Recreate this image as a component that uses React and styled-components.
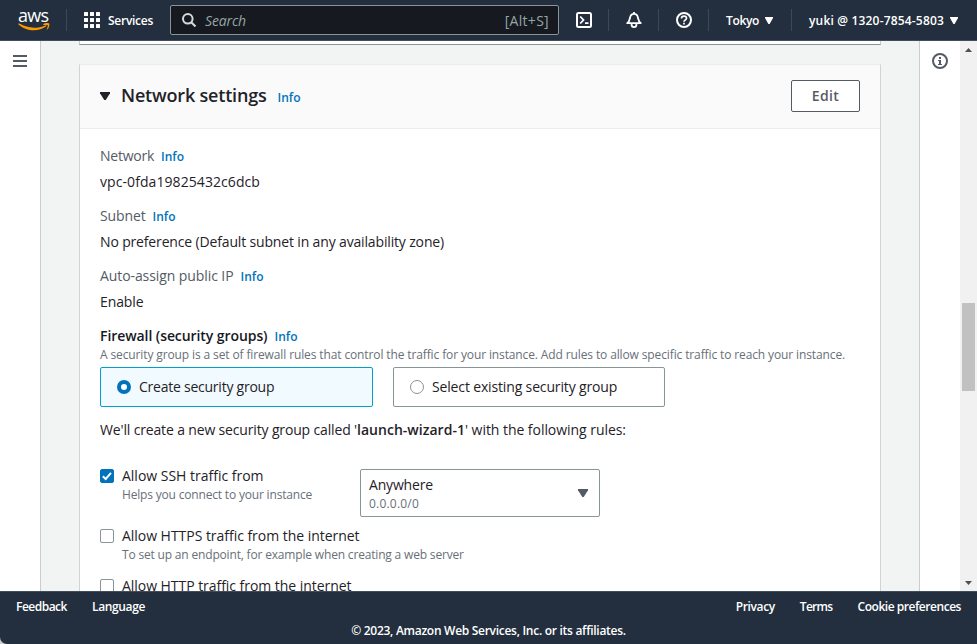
import React from "react";
import styled, { createGlobalStyle } from "styled-components";

const GlobalStyle = createGlobalStyle`
  * { box-sizing: border-box; }
  body {
    margin: 0;
    overflow: hidden;
    background: #fff;
    font-family: "Open Sans", "Noto Sans", sans-serif;
    font-size: 14px;
    color: #1f2228;
  }
  button { font-family: inherit; cursor: pointer; }
  svg { display: block; flex: none; }
`;

/* ---------- shared ---------- */

const Text = styled.span`
  white-space: pre;
  letter-spacing: ${(p) => p.$track || 0}px;
`;

const InfoLink = styled.a`
  color: #0073bb;
  font-size: 12px;
  font-weight: 600;
  line-height: 18px;
  cursor: pointer;
`;

const Caret = ({ size = 8, height = 7 }) => (
  <svg width={size} height={height} viewBox="0 0 8 7" preserveAspectRatio="none">
    <path d="M0 0h8v1L4.6 7H3.4L0 1z" fill="currentColor" />
  </svg>
);

/* ---------- frame ---------- */

const Page = styled.div`
  display: flex;
  flex-direction: column;
  height: 644px;
  width: 977px;
  overflow: hidden;
  background: #c9cdd2;
`;

const Body = styled.div`
  display: flex;
  flex: 1;
  min-height: 0;
  background: #f2f3f3;
`;

/* ---------- top bar ---------- */

const TopBar = styled.header`
  display: flex;
  align-items: center;
  flex: none;
  height: 41px;
  background: #232f3e;
  border-bottom: 1px solid #414d5c;
  color: #fff;
  font-size: 12px;
  font-weight: 600;
`;

const Logo = styled.a`
  display: flex;
  flex-direction: column;
  align-items: flex-start;
  width: 48px;
  margin-left: 18px;
`;

const LogoWord = styled.span`
  height: 14px;
  font-size: 18px;
  font-weight: 500;
  line-height: 12px;
  letter-spacing: -0.7px;
`;

const Divider = styled.span`
  width: 1px;
  height: 22px;
  background: #414750;
`;

const ServicesButton = styled.a`
  display: flex;
  align-items: center;
  gap: 8px;
  width: 103px;
  padding-left: 17px;
`;

const SearchBox = styled.div`
  display: flex;
  align-items: center;
  width: 389px;
  height: 30px;
  padding: 0 9px 0 11px;
  background: #16191f;
  border: 1px solid #879596;
  border-radius: 2px;
  color: #95a5a6;
  font-size: 14px;
  font-weight: 400;
`;

const SearchHint = styled.span`
  flex: 1;
  padding-left: 9px;
  font-style: italic;
`;

const IconButton = styled.a`
  display: flex;
  align-items: center;
  justify-content: center;
  width: 49px;
`;

const MenuButton = styled.a`
  display: flex;
  align-items: center;
  justify-content: space-between;
  width: ${(p) => p.$width}px;
  padding: 0 ${(p) => p.$end}px 0 17px;
`;

/* ---------- side rails ---------- */

const Rail = styled.aside`
  display: flex;
  justify-content: center;
  flex: none;
  width: 41px;
  padding-top: ${(p) => (p.$right ? 12 : 14)}px;
  background: #fff;
  border-${(p) => (p.$right ? "left" : "right")}: 1px solid #c8cccc;
  color: #545b64;
`;

const Scrollbar = styled.div`
  display: flex;
  flex-direction: column;
  align-items: center;
  width: 17px;
  padding: 7px 0 6px;
  background: #f1f1f1;
  color: #505050;
`;

const ScrollThumb = styled.div`
  width: 13px;
  height: 88px;
  margin: 251px 0 auto;
  background: #c1c1c1;
`;

/* ---------- content ---------- */

const Main = styled.main`
  flex: 1;
  min-width: 0;
  padding: 0 38px;
  overflow: hidden;
`;

const PreviousCard = styled.div`
  height: 4px;
  background: #fff;
  border: 1px solid #c8cccc;
  border-top: 0;
  border-bottom-color: #879596;
`;

const Card = styled.section`
  height: 560px;
  margin-top: 19px;
  background: #fff;
  border: 1px solid #d0d4d4;
  border-top-color: #eaeded;
`;

const CardHeader = styled.div`
  display: flex;
  align-items: center;
  height: 64px;
  padding: 0 20px 2px;
  background: #fafafa;
  border-bottom: 1px solid #eaeded;
`;

const CardTitle = styled.h2`
  display: flex;
  align-items: baseline;
  gap: 11px;
  flex: 1;
  margin: 0 0 1px 11px;
  font-size: 18px;
  font-weight: 600;
  line-height: 22px;
`;

const EditButton = styled.button`
  width: 69px;
  height: 32px;
  padding: 0;
  background: #fff;
  border: 1px solid #545b64;
  border-radius: 2px;
  color: #545b64;
  font-size: 14px;
  font-weight: 600;
`;

const CardBody = styled.div`
  padding: 17px 20px 0;
`;

const Field = styled.div`
  height: 60px;
`;

const FieldLabel = styled.div`
  display: flex;
  align-items: baseline;
  gap: 7px;
  height: 20px;
  line-height: 20px;
  color: ${(p) => (p.$strong ? "#16191f" : "#545b64")};
  font-weight: ${(p) => (p.$strong ? 600 : 400)};
`;

const FieldValue = styled.div`
  margin-top: 6px;
  line-height: 20px;
`;

const Hint = styled.div`
  height: 18px;
  color: #687078;
  font-size: 12px;
  line-height: 18px;
`;

const Tiles = styled.div`
  display: grid;
  grid-template-columns: 273px 272px;
  gap: 20px;
  margin-top: 3px;
`;

const Tile = styled.label`
  display: flex;
  align-items: center;
  gap: 8px;
  height: 40px;
  padding: 0 16px;
  line-height: 20px;
  background: ${(p) => (p.$selected ? "#f1faff" : "#fff")};
  border: 1px solid ${(p) => (p.$selected ? "#00a1c9" : "#879596")};
  border-radius: 2px;
`;

const Radio = styled.span`
  width: 14px;
  height: 14px;
  background: #fff;
  border: ${(p) => (p.$selected ? "4px solid #0073bb" : "1px solid #879596")};
  border-radius: 50%;
`;

const Note = styled.p`
  margin: 13px 0 0;
  line-height: 20px;
  b { font-weight: 600; }
`;

const Rules = styled.div`
  display: flex;
  flex-direction: column;
  margin-top: 26px;
`;

const Rule = styled.div`
  display: grid;
  grid-template-columns: ${(p) => (p.$withSelect ? "260px 240px" : "500px")};
  height: ${(p) => p.$height}px;
`;

const CheckRow = styled.label`
  display: flex;
  gap: 8px;
`;

const Checkbox = styled.span`
  flex: none;
  width: 14px;
  height: 14px;
  margin-top: 3px;
  background: ${(p) => (p.$checked ? "#0073bb" : "#fff")};
  border: 1px solid ${(p) => (p.$checked ? "#0073bb" : "#879596")};
  border-radius: 2px;
`;

const CheckLabel = styled.div`
  height: 20px;
  line-height: 20px;
`;

const Select = styled.div`
  display: flex;
  align-items: center;
  justify-content: space-between;
  height: 48px;
  margin-top: 3px;
  padding: 0 11px 0 8px;
  border: 1px solid #879596;
  border-radius: 2px;
  color: #545b64;
`;

const SelectValue = styled.div`
  padding-top: 2px;
  color: #1f2228;
  line-height: 20px;
`;

/* ---------- footer ---------- */

const Footer = styled.footer`
  flex: none;
  height: 53px;
  padding: 5px 16px 0;
  background: #232f3e;
  border-top: 1px solid #414d5c;
  border-bottom-left-radius: 7px;
  color: #fff;
  font-size: 12px;
  font-weight: 600;
`;

const FooterLinks = styled.nav`
  display: flex;
  gap: 25px;
  height: 20px;
  line-height: 20px;
`;

const FooterSpacer = styled.span`
  flex: 1;
`;

const Copyright = styled.div`
  margin-top: 4px;
  line-height: 20px;
  text-align: center;
`;

/* ---------- icons ---------- */

const Smile = () => (
  <svg width="32" height="8" viewBox="0 0 32 8" fill="#f90">
    <path d="M.3.8C.5.3.9.3 1.4.6 6 3.3 10.9 4.7 16 4.700c3.900 0 7.700-.8 11.400-2.300.8-.3 1.300.5.600 1.100C24.800 5.900 20.400 7.300 16 7.300 10.200 7.300 4.600 5.100.5 1.400.3 1.200.2 1 .3.800z" />
    <path d="M25.400.9c1.700-1.100 5.300-1 5.800-.3.500.8-.1 4.500-1.900 6-.3.300-.7.100-.5-.3.500-1.200 1.300-3.600.9-4.100-.4-.5-2.800-.3-3.900-.1-.6 0-.9-.8-.4-1.200z" />
  </svg>
);

const GridIcon = () => (
  <svg width="16" height="16" viewBox="0 0 16 16" fill="#fff">
    {[0, 6, 12].map((y) => [0, 6, 12].map((x) => (
      <rect key={`${x}-${y}`} x={x} y={y} width="4" height="4" rx=".5" />
    )))}
  </svg>
);

const SearchIcon = () => (
  <svg width="14" height="14" viewBox="0 0 14 14" fill="none" stroke="#d5dbdb" strokeWidth="2">
    <circle cx="5.800" cy="5.800" r="4.800" />
    <path d="M9.200 9.200l4.300 4.300" />
  </svg>
);

const ShellIcon = () => (
  <svg width="16" height="16" viewBox="0 0 16 16" fill="none" stroke="#fff" strokeWidth="2">
    <rect x="1" y="1" width="14" height="14" rx="1.500" />
    <path d="M4.200 4.500L7.500 8l-3.300 3.500M9 11.200h3.500" strokeWidth="1.800" />
  </svg>
);

const BellIcon = () => (
  <svg width="16" height="16" viewBox="0 0 16 16" fill="none" stroke="#fff" strokeWidth="1.800" strokeLinejoin="round">
    <path d="M8 0v1.800M1.200 11.100h13.600C12.400 9.300 12.400 8 11.900 5.500 11.400 3 10 1.900 8 1.900S4.600 3 4.100 5.500C3.600 8 3.600 9.300 1.200 11.100z" />
    <path d="M5.600 11.500v1.200a2.400 2.400 0 0 0 4.800 0v-1.200" />
  </svg>
);

const HelpIcon = () => (
  <svg width="16" height="16" viewBox="0 0 16 16" fill="none" stroke="#fff" strokeWidth="2">
    <circle cx="8" cy="8" r="7" />
    <path d="M5.500 6.400C5.500 4.900 6.600 4.200 8 4.200s2.500.8 2.500 2.100C10.500 7.900 8 7.900 8 9.800M8 10.800v1.800" strokeWidth="1.700" />
  </svg>
);

const MenuIcon = () => (
  <svg width="14" height="12" viewBox="0 0 14 12" fill="currentColor">
    <path d="M0 0h14v2H0zM0 5h14v2H0zM0 10h14v2H0z" />
  </svg>
);

const InfoIcon = () => (
  <svg width="16" height="16" viewBox="0 0 16 16">
    <circle cx="8" cy="8" r="7" fill="none" stroke="currentColor" strokeWidth="2" />
    <path d="M7 4h2v2H7zM6 7h3v4h1v1H6v-1h1V8H6z" fill="currentColor" />
  </svg>
);

const CheckIcon = () => (
  <svg width="12" height="12" viewBox="0 0 12 12" fill="none" stroke="#fff" strokeWidth="2">
    <path d="M1.800 6.200l2.900 2.800L10 2.800" />
  </svg>
);

const ScrollArrow = ({ down }) => (
  <svg width="7" height="4" viewBox="0 0 7 4" fill="currentColor">
    <path d={down ? "M0 0h7L3.500 4z" : "M0 4h7L3.500 0z"} />
  </svg>
);

/* ---------- page ---------- */

const fields = [
  { label: "Network", lt: -0.25, value: "vpc-0fda19825432c6dcb", vt: 0.075 },
  { label: "Subnet", lt: -0.13, value: "No preference (Default subnet in any availability zone)", vt: -0.155 },
  { label: "Auto-assign public IP", lt: -0.086, value: "Enable", vt: -0.1 },
];

const rules = [
  { label: "Allow SSH traffic from", lt: -0.011, hint: "Helps you connect to your instance", ht: -0.18, checked: true, height: 60 },
  { label: "Allow HTTPS traffic from the internet", lt: -0.034, hint: "To set up an endpoint, for example when creating a web server", ht: -0.175, height: 50 },
  { label: "Allow HTTP traffic from the internet", lt: -0.044, height: 50 },
];

export default function App() {
  return (
    <Page>
      <GlobalStyle />
      <TopBar>
        <Logo>
          <LogoWord>aws</LogoWord>
          <Smile />
        </Logo>
        <Divider />
        <ServicesButton>
          <GridIcon />
          <Text $track={-0.27}>Services</Text>
        </ServicesButton>
        <SearchBox>
          <SearchIcon />
          <SearchHint><Text $track={-0.147}>Search</Text></SearchHint>
          <Text $track={0.3}>[Alt+S]</Text>
        </SearchBox>
        <IconButton><ShellIcon /></IconButton>
        <Divider />
        <IconButton><BellIcon /></IconButton>
        <Divider />
        <IconButton><HelpIcon /></IconButton>
        <Divider />
        <MenuButton $width={82} $end={18}>
          <Text $track={-0.345}>Tokyo</Text>
          <Caret />
        </MenuButton>
        <Divider />
        <MenuButton $width={185} $end={19}>
          <Text $track={0.175}>yuki @ 1320-7854-5803</Text>
          <Caret />
        </MenuButton>
      </TopBar>

      <Body>
        <Rail><MenuIcon /></Rail>
        <Main>
          <PreviousCard />
          <Card>
            <CardHeader>
              <Caret size={10} height={8} />
              <CardTitle>
                <Text $track={-0.19}>Network settings</Text>
                <InfoLink>Info</InfoLink>
              </CardTitle>
              <EditButton><Text $track={0.38}>Edit</Text></EditButton>
            </CardHeader>
            <CardBody>
              {fields.map((f) => (
                <Field key={f.label}>
                  <FieldLabel>
                    <Text $track={f.lt}>{f.label}</Text>
                    <InfoLink>Info</InfoLink>
                  </FieldLabel>
                  <FieldValue><Text $track={f.vt}>{f.value}</Text></FieldValue>
                </Field>
              ))}
              <FieldLabel $strong>
                <Text $track={-0.075}>Firewall (security groups)</Text>
                <InfoLink>Info</InfoLink>
              </FieldLabel>
              <Hint>
                <Text $track={-0.122}>A security group is a set of firewall rules that control the traffic for your instance. Add rules to allow specific traffic to reach your instance.</Text>
              </Hint>
              <Tiles>
                <Tile $selected>
                  <Radio $selected />
                  <Text $track={-0.24}>Create security group</Text>
                </Tile>
                <Tile>
                  <Radio />
                  <Text $track={-0.15}>Select existing security group</Text>
                </Tile>
              </Tiles>
              <Note>
                <Text $track={-0.153}>We'll create a new security group called '</Text>
                <b><Text $track={0.029}>launch-wizard-1</Text></b>
                <Text $track={-0.047}>' with the following rules:</Text>
              </Note>
              <Rules>
                {rules.map((r) => (
                  <Rule key={r.label} $withSelect={r.checked} $height={r.height}>
                    <CheckRow>
                      <Checkbox $checked={r.checked}>{r.checked && <CheckIcon />}</Checkbox>
                      <div>
                        <CheckLabel><Text $track={r.lt}>{r.label}</Text></CheckLabel>
                        {r.hint && <Hint><Text $track={r.ht}>{r.hint}</Text></Hint>}
                      </div>
                    </CheckRow>
                    {r.checked && (
                      <Select>
                        <SelectValue>
                          <Text $track={-0.18}>Anywhere</Text>
                          <Hint><Text $track={0.204}>0.0.0.0/0</Text></Hint>
                        </SelectValue>
                        <Caret size={10} height={8} />
                      </Select>
                    )}
                  </Rule>
                ))}
              </Rules>
            </CardBody>
          </Card>
        </Main>
        <Rail $right><InfoIcon /></Rail>
        <Scrollbar>
          <ScrollArrow />
          <ScrollThumb />
          <ScrollArrow down />
        </Scrollbar>
      </Body>

      <Footer>
        <FooterLinks>
          <Text $track={-0.5}>Feedback</Text>
          <Text $track={-0.363}>Language</Text>
          <FooterSpacer />
          <Text $track={-0.379}>Privacy</Text>
          <Text $track={-0.7}>Terms</Text>
          <Text $track={-0.459}>Cookie preferences</Text>
        </FooterLinks>
        <Copyright>
          <Text $track={-0.283}>© 2023, Amazon Web Services, Inc. or its affiliates.</Text>
        </Copyright>
      </Footer>
    </Page>
  );
}
